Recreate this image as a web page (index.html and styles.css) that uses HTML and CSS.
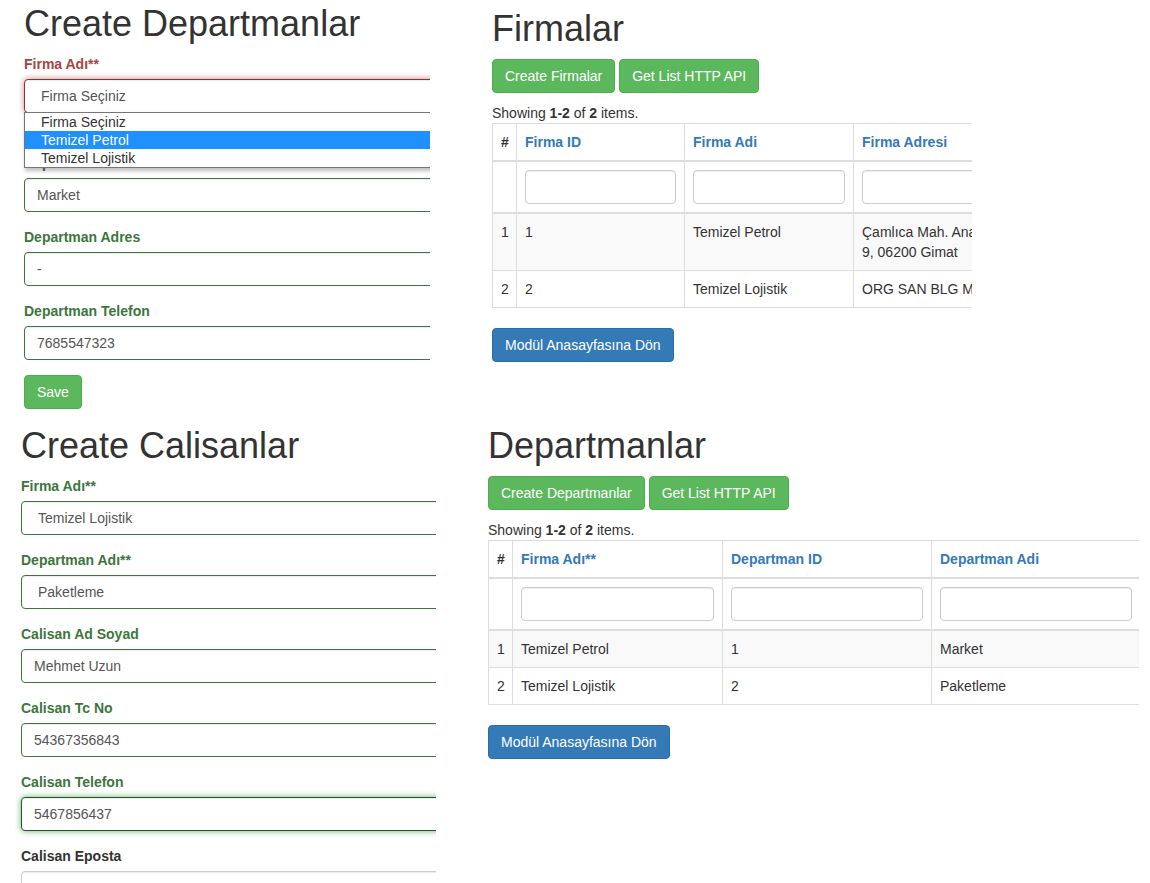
FILE: index.html
```html
<!DOCTYPE html>
<html lang="tr">
<head>
<meta charset="utf-8">
<title>Departmanlar</title>
<link rel="stylesheet" href="styles.css">
</head>
<body>
<div class="collage">
  <div class="strip strip-top">
    <section class="panel panel-a">
      <h1 class="title title-a">Create Departmanlar</h1>
      <form class="form">
        <div class="form-group has-error">
          <label class="control-label">Firma Adı**</label>
          <div class="select-wrap">
            <select class="form-control select focus-error">
              <option>Firma Seçiniz</option>
              <option>Temizel Petrol</option>
              <option>Temizel Lojistik</option>
            </select>
            <ul class="dropdown">
              <li>Firma Seçiniz</li>
              <li class="active">Temizel Petrol</li>
              <li>Temizel Lojistik</li>
            </ul>
          </div>
          <div class="help-block help-hidden">Firma Adı** cannot be blank.</div>
        </div>
        <div class="form-group has-success">
          <label class="control-label">Departman Adı</label>
          <input class="form-control" type="text" value="Market">
        </div>
        <div class="form-group has-success">
          <label class="control-label">Departman Adres</label>
          <input class="form-control" type="text" value="-">
        </div>
        <div class="form-group has-success">
          <label class="control-label">Departman Telefon</label>
          <input class="form-control" type="text" value="7685547323">
        </div>
        <div class="form-group">
          <button type="button" class="btn btn-success">Save</button>
        </div>
      </form>
    </section>

    <section class="panel panel-b">
      <h1 class="title title-b">Firmalar</h1>
      <p class="toolbar">
        <button type="button" class="btn btn-success">Create Firmalar</button>
        <button type="button" class="btn btn-success">Get List HTTP API</button>
      </p>
      <div class="summary">Showing <b>1-2</b> of <b>2</b> items.</div>
      <table class="table grid-firma">
        <colgroup>
          <col class="c-num">
          <col class="c-fid">
          <col class="c-fadi">
          <col class="c-fadres">
          <col class="c-ftel">
        </colgroup>
        <thead>
          <tr>
            <th>#</th>
            <th><a href="#">Firma ID</a></th>
            <th><a href="#">Firma Adi</a></th>
            <th><a href="#">Firma Adresi</a></th>
            <th><a href="#">Firma Telefon</a></th>
          </tr>
          <tr class="filters">
            <td>&nbsp;</td>
            <td><input class="form-control" type="text"></td>
            <td><input class="form-control" type="text"></td>
            <td><input class="form-control" type="text"></td>
            <td><input class="form-control" type="text"></td>
          </tr>
        </thead>
        <tbody>
          <tr>
            <td>1</td>
            <td>1</td>
            <td>Temizel Petrol</td>
            <td>Çamlıca Mah. Anadolu Blv. No: 9, 06200 Gimat</td>
            <td>3124567890</td>
          </tr>
          <tr>
            <td>2</td>
            <td>2</td>
            <td>Temizel Lojistik</td>
            <td>ORG SAN BLG MAH.</td>
            <td>3129876543</td>
          </tr>
        </tbody>
      </table>
      <button type="button" class="btn btn-primary">Modül Anasayfasına Dön</button>
    </section>
  </div>

  <div class="strip strip-bottom">
    <section class="panel panel-c">
      <h1 class="title title-c">Create Calisanlar</h1>
      <form class="form">
        <div class="form-group has-success">
          <label class="control-label">Firma Adı**</label>
          <select class="form-control select">
            <option>Temizel Lojistik</option>
          </select>
        </div>
        <div class="form-group has-success">
          <label class="control-label">Departman Adı**</label>
          <select class="form-control select">
            <option>Paketleme</option>
          </select>
        </div>
        <div class="form-group has-success">
          <label class="control-label">Calisan Ad Soyad</label>
          <input class="form-control" type="text" value="Mehmet Uzun">
        </div>
        <div class="form-group has-success">
          <label class="control-label">Calisan Tc No</label>
          <input class="form-control" type="text" value="54367356843">
        </div>
        <div class="form-group has-success">
          <label class="control-label">Calisan Telefon</label>
          <input class="form-control focus-success" type="text" value="5467856437">
        </div>
        <div class="form-group">
          <label class="control-label">Calisan Eposta</label>
          <input class="form-control" type="text">
        </div>
      </form>
    </section>

    <section class="panel panel-d">
      <h1 class="title title-d">Departmanlar</h1>
      <p class="toolbar">
        <button type="button" class="btn btn-success">Create Departmanlar</button>
        <button type="button" class="btn btn-success">Get List HTTP API</button>
      </p>
      <div class="summary">Showing <b>1-2</b> of <b>2</b> items.</div>
      <table class="table grid-dep">
        <colgroup>
          <col class="c-num">
          <col class="c-dfirma">
          <col class="c-did">
          <col class="c-dadi">
          <col class="c-dextra">
        </colgroup>
        <thead>
          <tr>
            <th>#</th>
            <th><a href="#">Firma Adı**</a></th>
            <th><a href="#">Departman ID</a></th>
            <th><a href="#">Departman Adi</a></th>
            <th><a href="#">Departman Adres</a></th>
          </tr>
          <tr class="filters">
            <td>&nbsp;</td>
            <td><input class="form-control" type="text"></td>
            <td><input class="form-control" type="text"></td>
            <td><input class="form-control" type="text"></td>
            <td><input class="form-control" type="text"></td>
          </tr>
        </thead>
        <tbody>
          <tr>
            <td>1</td>
            <td>Temizel Petrol</td>
            <td>1</td>
            <td>Market</td>
            <td>-</td>
          </tr>
          <tr>
            <td>2</td>
            <td>Temizel Lojistik</td>
            <td>2</td>
            <td>Paketleme</td>
            <td>-</td>
          </tr>
        </tbody>
      </table>
      <button type="button" class="btn btn-primary">Modül Anasayfasına Dön</button>
    </section>
  </div>
</div>
</body>
</html>
```

FILE: styles.css
```css
* {
  box-sizing: border-box;
}

html,
body {
  margin: 0;
  overflow: hidden;
}

body {
  width: 1150px;
  height: 883px;
  font-family: "Liberation Sans", Arial, Helvetica, sans-serif;
  font-size: 14px;
  line-height: 1.42857143;
  color: #333;
  background: #fff;
}

.strip {
  display: flex;
  align-items: stretch;
  overflow: hidden;
}

.strip-top {
  height: 420px;
}

.strip-bottom {
  height: 463px;
}

.panel {
  flex: none;
  overflow: hidden;
}

.panel-a {
  margin-left: 16px;
  padding-left: 8px;
  width: 414px;
}

.panel-b {
  margin-left: 62px;
  width: 480px;
}

.panel-c {
  margin-left: 13px;
  padding-left: 8px;
  width: 423px;
}

.panel-d {
  margin-left: 52px;
  width: 651px;
}

.title {
  font-size: 36px;
  font-weight: 500;
  line-height: 1.1;
  margin: 0 0 10px;
  color: #333;
}

.title-a {
  margin-top: 4px;
}

.title-b {
  margin-top: 9px;
}

.title-c,
.title-d {
  margin-top: 6px;
}

.form {
  width: 640px;
}

.form-group {
  margin-bottom: 15px;
}

.control-label {
  display: inline-block;
  max-width: 100%;
  margin-bottom: 5px;
  font-weight: 700;
}

.has-error .control-label,
.has-error .help-block {
  color: #a94442;
}

.has-success .control-label {
  color: #3c763d;
}

.form-control {
  display: block;
  width: 100%;
  height: 34px;
  padding: 6px 12px;
  font-family: inherit;
  font-size: 14px;
  line-height: 1.42857143;
  color: #555;
  background: #fff;
  border: 1px solid #ccc;
  border-radius: 4px;
  box-shadow: inset 0 1px 1px rgba(0, 0, 0, .075);
  outline: none;
}

.has-success .form-control {
  border-color: #3c763d;
}

.has-error .form-control {
  border-color: #a94442;
}

.has-error .form-control.focus-error {
  border-color: #843534;
  box-shadow: inset 0 1px 1px rgba(0, 0, 0, .075), 0 0 6px #ce8483;
}

.has-success .form-control.focus-success {
  border-color: #2b542c;
  box-shadow: inset 0 1px 1px rgba(0, 0, 0, .075), 0 0 6px #67b168;
}

.select {
  -webkit-appearance: none;
  appearance: none;
  padding-left: 16px;
}

.help-block {
  display: block;
  margin-top: 5px;
  margin-bottom: 10px;
}

.help-hidden {
  visibility: hidden;
}

.select-wrap {
  position: relative;
}

.dropdown {
  position: absolute;
  left: 0;
  top: calc(100% - 1px);
  width: 100%;
  margin: 0;
  padding: 0;
  list-style: none;
  background: #fff;
  border: 1px solid #767676;
  box-shadow: 1px 3px 4px rgba(0, 0, 0, .25);
  font-size: 14px;
  line-height: 18px;
  color: #333;
  z-index: 5;
}

.dropdown li {
  height: 18px;
  padding-left: 16px;
}

.dropdown li.active {
  background: #1e90ff;
  color: #fff;
}

.btn {
  display: inline-block;
  padding: 6px 12px;
  margin: 0;
  font-family: inherit;
  font-size: 14px;
  line-height: 1.42857143;
  color: #fff;
  white-space: nowrap;
  vertical-align: middle;
  border: 1px solid transparent;
  border-radius: 4px;
  cursor: pointer;
}

.btn-success {
  background: #5cb85c;
  border-color: #4cae4c;
}

.btn-primary {
  background: #337ab7;
  border-color: #2e6da4;
}

.toolbar {
  margin: 0 0 10px;
}

.table {
  border-collapse: collapse;
  border-spacing: 0;
  table-layout: fixed;
  margin-bottom: 20px;
  border: 1px solid #ddd;
}

.table th,
.table td {
  padding: 8px;
  border: 1px solid #ddd;
  vertical-align: top;
  text-align: left;
  line-height: 1.42857143;
}

.table thead th {
  vertical-align: bottom;
  border-bottom-width: 2px;
}

.table thead td {
  border-bottom-width: 2px;
}

.table tbody tr:nth-child(odd) {
  background: #f9f9f9;
}

.table th a {
  color: #337ab7;
  text-decoration: none;
}

.grid-firma {
  width: 727px;
}

.grid-dep {
  width: 802px;
}

.c-num {
  width: 24px;
}

.c-fid {
  width: 168px;
}

.c-fadi {
  width: 169px;
}

.c-fadres {
  width: 216px;
}

.c-ftel {
  width: 150px;
}

.c-dfirma {
  width: 210px;
}

.c-did,
.c-dadi {
  width: 209px;
}

.c-dextra {
  width: 150px;
}
```
